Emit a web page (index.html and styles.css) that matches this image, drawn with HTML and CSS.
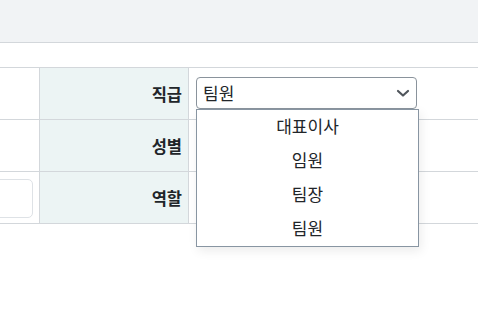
FILE: index.html
```html
<!DOCTYPE html>
<html lang="ko">
<head>
  <meta charset="UTF-8" />
  <meta name="viewport" content="width=device-width, initial-scale=1.0"/>
  <title>사원 정보</title>
  <link rel="stylesheet" href="styles.css">
</head>
<body>

  <div class="topbar"></div>
  <div class="spacer"></div>

  <div class="form-table">
    <div class="row">
      <div class="cell first"></div>
      <div class="cell label">직급</div>
      <div class="cell value">
        <div class="select-wrap">
          <div class="select">
            <span>팀원</span>
            <svg class="chevron" width="14" height="10" viewBox="0 0 14 10">
              <path d="M2 3 L7 7.5 L12 3" fill="none" stroke="#50565c" stroke-width="2.2" stroke-linecap="round" stroke-linejoin="round"/>
            </svg>
          </div>
          <ul class="options">
            <li>대표이사</li>
            <li>임원</li>
            <li>팀장</li>
            <li>팀원</li>
          </ul>
        </div>
      </div>
    </div>
    <div class="row">
      <div class="cell first"></div>
      <div class="cell label">성별</div>
      <div class="cell value"></div>
    </div>
    <div class="row">
      <div class="cell first">
        <input class="text-input" type="text" />
      </div>
      <div class="cell label">역할</div>
      <div class="cell value"></div>
    </div>
  </div>

</body>
</html>
```

FILE: styles.css
```css
html, body {
  height: 100%;
}
body {
  margin: 0;
  font-family: "Noto Sans CJK KR", "Noto Sans", sans-serif;
  color: #212529;
  background: #fff;
}
.topbar {
  height: 42px;
  background: #f1f3f5;
  border-bottom: 1px solid #d3d7db;
}
.spacer {
  height: 24px;
}
.form-table {
  border-top: 1px solid #d3d7db;
}
.row {
  display: flex;
  height: 51px;
  border-bottom: 1px solid #d3d7db;
}
.cell {
  display: flex;
  align-items: center;
}
.first {
  width: 39px;
  justify-content: flex-end;
  padding-right: 6px;
  box-sizing: border-box;
}
.label {
  width: 150px;
  background: #ecf4f4;
  border-left: 1px solid #d3d7db;
  border-right: 1px solid #d3d7db;
  box-sizing: border-box;
  justify-content: flex-end;
  padding-right: 6px;
  font-size: 16.5px;
  font-weight: 700;
}
.value {
  flex: 1;
  padding-left: 7px;
}
.select-wrap {
  position: relative;
  margin-top: -2px;
}
.select {
  width: 221px;
  height: 32px;
  box-sizing: border-box;
  border: 1px solid #8a939c;
  border-radius: 4px;
  display: flex;
  align-items: center;
  justify-content: space-between;
  padding: 0 6px 0 6px;
  font-size: 17px;
  background: #fff;
}
.chevron {
  margin-top: 1px;
}
.options {
  position: absolute;
  top: 32px;
  left: 0;
  width: 223px;
  box-sizing: border-box;
  margin: 0;
  padding: 0;
  list-style: none;
  background: #fff;
  border: 1px solid #8895a2;
  box-shadow: 2px 4px 10px rgba(0, 0, 0, 0.08);
  z-index: 2;
}
.options li {
  height: 34px;
  line-height: 32px;
  text-align: center;
  font-size: 17px;
}
.text-input {
  width: 80px;
  height: 39px;
  flex-shrink: 0;
  box-sizing: border-box;
  border: 1px solid #dee2e6;
  border-radius: 5px;
  margin-top: 2px;
}
```
